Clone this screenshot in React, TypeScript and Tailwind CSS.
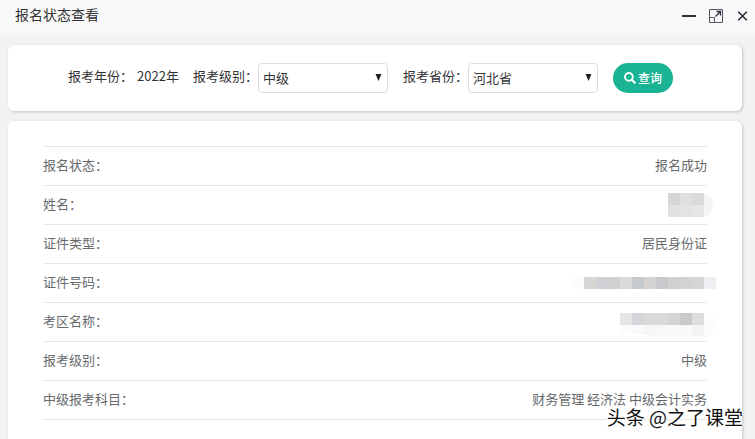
import React from 'react';

interface Row {
  label: string;
  value: React.ReactNode;
}

interface MosaicProps {
  id: string;
  width: number;
  height: number;
  rows: string[][];
  children?: React.ReactNode;
}

const Mosaic: React.FC<MosaicProps> = ({ id, width, height, rows, children }) => (
  <svg
    width={width}
    height={height}
    viewBox={`0 0 ${width} ${height}`}
    shapeRendering="crispEdges"
    aria-hidden="true"
  >
    {children}
    {rows.map((cells, r) =>
      cells.map((color, c) => (
        <rect key={`${id}-${r}-${c}`} x={c * 12} y={r * 12} width={12} height={12} fill={color} />
      ))
    )}
  </svg>
);

const NameMosaic = () => (
  <Mosaic
    id="name"
    width={45}
    height={24}
    rows={[
      ['#d4d5d6', '#dfdfde', '#d9dadc'],
      ['#e1e1e1', '#e2e4e4', '#e5e5e6'],
    ]}
  >
    <path d="M36 0a9 12 0 0 1 0 24z" fill="#f4f5f7" shapeRendering="auto" />
  </Mosaic>
);

const NumberMosaic = () => (
  <Mosaic
    id="number"
    width={144}
    height={12}
    rows={[
      [
        '#fcfcfc', '#d6d6d5', '#cfd1d6', '#d0d0d1', '#d9d9d7', '#c6cacf',
        '#d4d3d1', '#c8c8cd', '#d1d1d2', '#d1d2d3', '#d4d5d5', '#eff0f3',
      ],
    ]}
  />
);

const AreaMosaic = () => (
  <Mosaic
    id="area"
    width={95}
    height={24}
    rows={[['#e5e5e4', '#d5d6da', '#dad9d8', '#d9d9da', '#d4d4d6', '#c9c9ca', '#dcdddd']]}
  >
    <path d="M84 0h2a9 12 0 0 1 0 24h-2z" fill="#fbfcfc" shapeRendering="auto" />
    <path d="M0 12h12v8H0z" fill="#fbfbfb" />
    <path d="M12 12h12v10l-12-2z" fill="#f8f8f9" />
    <path d="M24 12h12v11l-12-1z" fill="#f7f6f6" />
    <path d="M36 12h24v11H36z" fill="#f8f8f8" />
    <path d="M60 12h12v11H60z" fill="#f9f9f9" />
    <path d="M72 12h12v11H72z" fill="#f2f3f3" />
  </Mosaic>
);

const rows: Row[] = [
  { label: '报名状态：', value: '报名成功' },
  { label: '姓名：', value: <span className="-mr-1.5 pt-0.5"><NameMosaic /></span> },
  { label: '证件类型：', value: '居民身份证' },
  { label: '证件号码：', value: <span className="-mr-[9px] pt-0.5"><NumberMosaic /></span> },
  { label: '考区名称：', value: <span className="-mr-2 pt-2"><AreaMosaic /></span> },
  { label: '报考级别：', value: '中级' },
  { label: '中级报考科目：', value: '财务管理 经济法 中级会计实务' },
];

const Select: React.FC<{ id: string; label: string; options: string[] }> = ({ id, label, options }) => (
  <div className="flex items-center">
    <label htmlFor={id} className="-mt-1">{label}</label>
    <div className="relative">
      <select
        id={id}
        className="block h-[30px] w-[130px] appearance-none rounded border border-[#dcdcdc] bg-white pl-1 pr-5 text-[#333]"
      >
        {options.map((option) => (
          <option key={option}>{option}</option>
        ))}
      </select>
      <svg
        className="pointer-events-none absolute top-[11px] right-[6px]"
        width="7"
        height="7"
        viewBox="0 0 7 7"
        aria-hidden="true"
      >
        <path d="M.5 0h6L3.5 7z" fill="#222" />
      </svg>
    </div>
  </div>
);

const TitleBar = () => (
  <header className="flex h-[35px] shrink-0 items-start justify-between bg-[#f8f8f8] pl-[15px] pr-[7px]">
    <h1 className="mt-1 text-sm leading-5">报名状态查看</h1>
    <div className="mt-2 flex items-center text-[#2e2d3c]">
      <button type="button" aria-label="最小化">
        <svg width="14" height="16" viewBox="0 0 14 16">
          <path d="M0 7h14v2H0z" fill="currentColor" />
        </svg>
      </button>
      <button type="button" aria-label="最大化" className="ml-[13px]">
        <svg width="14" height="16" viewBox="0 0 14 16" fill="none" stroke="currentColor">
          <path d="M.5 9.500v-8h13v13h-8M.5 9.500h5v5h-5z" strokeWidth="1" strokeOpacity=".8" />
          <path d="M6.500 8.500l5-5M7.500 3.500h4v4" strokeWidth="1.300" />
        </svg>
      </button>
      <button type="button" aria-label="关闭" className="ml-[14px]">
        <svg width="11" height="16" viewBox="0 0 11 16" fill="none" stroke="currentColor">
          <path d="M1.200 3.700l8.600 8.600M9.800 3.700l-8.600 8.600" strokeWidth="1.600" />
        </svg>
      </button>
    </div>
  </header>
);

const SearchForm = () => (
  <form
    className="flex shrink-0 items-center rounded-md bg-white py-[18px] pl-[60px] shadow-[1px_1px_3px_rgba(0,0,0,0.2)]"
    onSubmit={(e) => e.preventDefault()}
  >
    <div className="-mt-1 flex gap-1">
      <span>报考年份：</span>
      <span>2022年</span>
    </div>
    <div className="ml-[14px] flex gap-[15px]">
      <Select id="level" label="报考级别：" options={['中级', '初级', '高级']} />
      <Select id="province" label="报考省份：" options={['河北省', '北京市', '山东省']} />
      <button
        type="submit"
        className="flex h-[30px] w-[60px] items-center justify-center gap-0.5 rounded-full bg-[#1ab394] text-xs font-medium text-white"
      >
        <svg width="12" height="12" viewBox="0 0 12 12" fill="none" stroke="currentColor" aria-hidden="true">
          <circle cx="4.900" cy="4.900" r="3.900" strokeWidth="1.900" />
          <path d="M7.800 7.800l3 3" strokeWidth="2.200" strokeLinecap="round" />
        </svg>
        查询
      </button>
    </div>
  </form>
);

const StatusTable = () => (
  <section className="grow rounded-t-md bg-white px-[35px] pt-[25px] shadow-[1px_1px_3px_rgba(0,0,0,0.2)]">
    <table className="w-full border-collapse text-[#676a6c]">
      <tbody>
        {rows.map((row) => (
          <tr key={row.label} className="h-[39px] border-y border-[#e7e7e7]">
            <th scope="row" className="p-0 pb-0.5 text-left font-normal">{row.label}</th>
            <td className="p-0 pb-0.5">
              <div className="flex justify-end">{row.value}</div>
            </td>
          </tr>
        ))}
      </tbody>
    </table>
  </section>
);

const App = () => (
  <div className="relative flex h-screen flex-col overflow-hidden bg-[#f2f2f2] font-['Noto_Sans_CJK_SC',sans-serif] text-[13px] leading-5 text-[#333]">
    <TitleBar />
    <main className="flex grow flex-col gap-[10px] pt-[10px] pr-[13px] pl-2">
      <SearchForm />
      <StatusTable />
    </main>
    <div className="absolute right-3 bottom-2 text-[19px] leading-7 text-[#111] [text-shadow:-1px_-1px_0_#fff,1px_-1px_0_#fff,-1px_1px_0_#fff]">
      头条 @之了课堂
    </div>
  </div>
);

export default App;
